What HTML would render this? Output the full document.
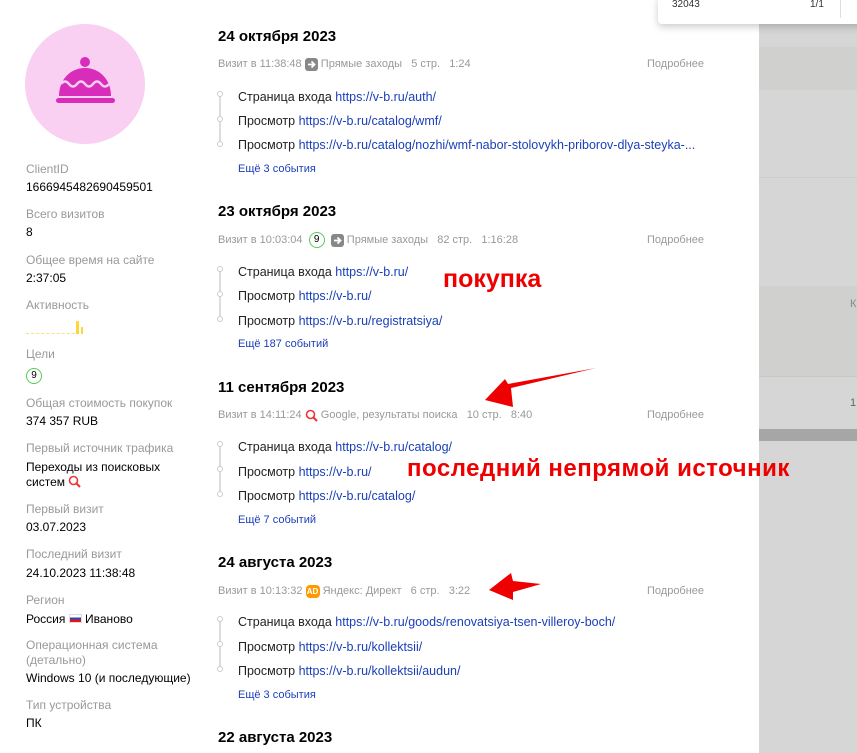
<!DOCTYPE html>
<html><head><meta charset="utf-8">
<style>
*{margin:0;padding:0;box-sizing:border-box}
body{width:857px;height:753px;overflow:hidden;background:#fff;font-family:"Liberation Sans","DejaVu Sans",sans-serif;position:relative;color:#000}
.a{position:absolute;white-space:nowrap;line-height:16px}
.l{font-size:12px;color:#999;left:26px}
.v{font-size:12px;color:#000;left:26px}
.h{font-size:15px;font-weight:bold;left:218px;line-height:20px}
.m{font-size:11px;color:#999;left:218px;height:16px}
.m *{vertical-align:middle}
.p{font-size:11px;color:#999;left:647px}
.r{font-size:12.5px;left:238px;color:#222}
.r b{font-weight:normal;color:#1a3fb8}
.more{font-size:11px;color:#1a3fb8;left:238px}
.tl{position:absolute;left:219px;width:2px;background:#ddd}
.dot{position:absolute;left:217px;width:6px;height:6px;border:1px solid #ccc;border-radius:50%;background:#fff}
.ico{display:inline-block;width:13px;height:13px;border-radius:3px;background:#888;color:#fff;font-size:8px;line-height:13px;text-align:center;font-weight:bold}
.g9{display:inline-block;width:16px;height:16px;border:1px solid #5c5;border-radius:50%;font-size:10px;color:#000;text-align:center;line-height:14px}
.red{position:absolute;color:#e00;font-weight:bold;font-size:24px;line-height:26px;white-space:nowrap}
</style></head><body>
<div style="position:absolute;left:759px;top:0;width:98px;height:753px;background:#d6d6d6"></div>
<div style="position:absolute;left:759px;top:47px;width:98px;height:43px;background:#d0d0cf"></div>
<div style="position:absolute;left:759px;top:177px;width:98px;height:1px;background:#ccc"></div>
<div style="position:absolute;left:759px;top:286px;width:98px;height:90px;background:#d0d0cf"></div>
<div style="position:absolute;left:759px;top:376px;width:98px;height:1px;background:#c8c8c8"></div>
<div style="position:absolute;left:759px;top:429px;width:98px;height:12px;background:#a6a6a6"></div>
<div class="a" style="left:850px;top:296px;font-size:11px;color:#888">К</div>
<div class="a" style="left:850px;top:395px;font-size:11px;color:#666">1</div>
<div style="position:absolute;left:658px;top:-4px;width:210px;height:28px;background:#fff;border-radius:4px;box-shadow:0 3px 8px rgba(0,0,0,.2)"></div>
<div class="a" style="left:672px;top:-3px;font-size:10px;color:#333">32043</div>
<div class="a" style="left:810px;top:-3px;font-size:10px;color:#333">1/1</div>
<div style="position:absolute;left:840px;top:0;width:1px;height:18px;background:#ddd"></div>

<div style="position:absolute;left:25px;top:24px;width:120px;height:120px;border-radius:50%;background:#f9cff2"></div>
<svg style="position:absolute;left:25px;top:24px" width="120" height="120" viewBox="25 24 120 120">
<circle cx="85" cy="62" r="5" fill="#d72dba"/>
<path d="M59 96 C59 80 70 68 85 68 C100 68 111 80 111 96 Z" fill="#d72dba"/>
<path d="M61 84 q4 -5 8 0 t8 0 t8 0 t8 0 t8 0 t8 0" stroke="#f9cff2" stroke-width="2.5" fill="none"/>
<rect x="56" y="98" width="59" height="5" rx="2.5" fill="#d72dba"/>
</svg>

<div class="a l" style="top:161px">ClientID</div>
<div class="a v" style="top:179px">1666945482690459501</div>
<div class="a l" style="top:206px">Всего визитов</div>
<div class="a v" style="top:224px">8</div>
<div class="a l" style="top:252px">Общее время на сайте</div>
<div class="a v" style="top:270px">2:37:05</div>
<div class="a l" style="top:297px">Активность</div>
<div style="position:absolute;left:26px;top:333px;width:49px;border-top:1px dashed #fde07a"></div>
<div style="position:absolute;left:76px;top:321px;width:3px;height:13px;background:#fcd53f"></div>
<div style="position:absolute;left:81px;top:327px;width:2px;height:7px;background:#fcd53f"></div>
<div class="a l" style="top:346px">Цели</div>
<div class="a" style="left:26px;top:366px"><span class="g9">9</span></div>
<div class="a l" style="top:395px">Общая стоимость покупок</div>
<div class="a v" style="top:413px">374 357 RUB</div>
<div class="a l" style="top:440px">Первый источник трафика</div>
<div class="a v" style="top:459px">Переходы из поисковых</div>
<div class="a v" style="top:474px">систем <svg width="13" height="13" viewBox="0 0 13 13" style="vertical-align:-2px"><circle cx="5.5" cy="5.5" r="4" stroke="#e33" stroke-width="1.6" fill="none"/><path d="M8.5 8.5 L12 12" stroke="#e33" stroke-width="2"/></svg></div>
<div class="a l" style="top:501px">Первый визит</div>
<div class="a v" style="top:519px">03.07.2023</div>
<div class="a l" style="top:546px">Последний визит</div>
<div class="a v" style="top:565px">24.10.2023 11:38:48</div>
<div class="a l" style="top:592px">Регион</div>
<div class="a v" style="top:611px">Россия <span style="display:inline-block;width:13px;height:9px;vertical-align:0;background:linear-gradient(#fff 33%,#1c4fc4 33%,#1c4fc4 66%,#e11 66%);border:1px solid #ddd"></span> Иваново</div>
<div class="a l" style="top:637px">Операционная система</div>
<div class="a l" style="top:652px">(детально)</div>
<div class="a v" style="top:670px">Windows 10 (и последующие)</div>
<div class="a l" style="top:697px">Тип устройства</div>
<div class="a v" style="top:715px">ПК</div>

<div class="a h" style="top:27px">24 октября 2023</div>
<div class="a m" style="top:56px"><span>Визит в 11:38:48</span> <svg width="13" height="13" viewBox="0 0 13 13"><rect width="13" height="13" rx="3" fill="#888"/><path d="M3 6.5h6M6.5 3.5l3 3-3 3" stroke="#fff" stroke-width="1.8" fill="none"/></svg> <span>Прямые заходы&nbsp;&nbsp; 5 стр.&nbsp;&nbsp; 1:24</span></div>
<div class="a p" style="top:56px">Подробнее</div>
<div class="tl" style="top:94px;height:52px"></div>
<div class="dot" style="top:91px"></div><div class="dot" style="top:116px"></div><div class="dot" style="top:141px"></div>
<div class="a r" style="top:89px">Страница входа <b>https://v-b.ru/auth/</b></div>
<div class="a r" style="top:113px">Просмотр <b>https://v-b.ru/catalog/wmf/</b></div>
<div class="a r" style="top:137px">Просмотр <b>https://v-b.ru/catalog/nozhi/wmf-nabor-stolovykh-priborov-dlya-steyka-...</b></div>
<div class="a more" style="top:161px">Ещё 3 события</div>

<div class="a h" style="top:202px">23 октября 2023</div>
<div class="a m" style="top:232px"><span>Визит в 10:03:04</span> &nbsp;<span class="g9">9</span>&nbsp; <svg width="13" height="13" viewBox="0 0 13 13"><rect width="13" height="13" rx="3" fill="#888"/><path d="M3 6.5h6M6.5 3.5l3 3-3 3" stroke="#fff" stroke-width="1.8" fill="none"/></svg> <span>Прямые заходы&nbsp;&nbsp; 82 стр.&nbsp;&nbsp; 1:16:28</span></div>
<div class="a p" style="top:232px">Подробнее</div>
<div class="tl" style="top:269px;height:52px"></div>
<div class="dot" style="top:266px"></div><div class="dot" style="top:291px"></div><div class="dot" style="top:316px"></div>
<div class="a r" style="top:264px">Страница входа <b>https://v-b.ru/</b></div>
<div class="a r" style="top:288px">Просмотр <b>https://v-b.ru/</b></div>
<div class="a r" style="top:313px">Просмотр <b>https://v-b.ru/registratsiya/</b></div>
<div class="a more" style="top:336px">Ещё 187 событий</div>

<div class="a h" style="top:378px">11 сентября 2023</div>
<div class="a m" style="top:407px"><span>Визит в 14:11:24</span> <svg width="13" height="13" viewBox="0 0 13 13"><circle cx="5.5" cy="5.5" r="4" stroke="#e33" stroke-width="1.6" fill="none"/><path d="M8.5 8.5 L12 12" stroke="#e33" stroke-width="2"/></svg> <span>Google, результаты поиска&nbsp;&nbsp; 10 стр.&nbsp;&nbsp; 8:40</span></div>
<div class="a p" style="top:407px">Подробнее</div>
<div class="tl" style="top:444px;height:52px"></div>
<div class="dot" style="top:441px"></div><div class="dot" style="top:466px"></div><div class="dot" style="top:491px"></div>
<div class="a r" style="top:439px">Страница входа <b>https://v-b.ru/catalog/</b></div>
<div class="a r" style="top:464px">Просмотр <b>https://v-b.ru/</b></div>
<div class="a r" style="top:488px">Просмотр <b>https://v-b.ru/catalog/</b></div>
<div class="a more" style="top:512px">Ещё 7 событий</div>

<div class="a h" style="top:553px">24 августа 2023</div>
<div class="a m" style="top:583px"><span>Визит в 10:13:32</span> <span class="ico" style="background:#f90;border-radius:4px;width:14px">AD</span> <span>Яндекс: Директ&nbsp;&nbsp; 6 стр.&nbsp;&nbsp; 3:22</span></div>
<div class="a p" style="top:583px">Подробнее</div>
<div class="tl" style="top:619px;height:52px"></div>
<div class="dot" style="top:616px"></div><div class="dot" style="top:641px"></div><div class="dot" style="top:666px"></div>
<div class="a r" style="top:614px">Страница входа <b>https://v-b.ru/goods/renovatsiya-tsen-villeroy-boch/</b></div>
<div class="a r" style="top:639px">Просмотр <b>https://v-b.ru/kollektsii/</b></div>
<div class="a r" style="top:663px">Просмотр <b>https://v-b.ru/kollektsii/audun/</b></div>
<div class="a more" style="top:687px">Ещё 3 события</div>

<div class="a h" style="top:728px">22 августа 2023</div>

<div class="red" style="left:443px;top:266px;font-size:25px">покупка</div>
<div class="red" style="left:407px;top:456px;letter-spacing:0.5px">последний непрямой источник</div>
<svg style="position:absolute;left:0;top:0" width="857" height="753">
<path d="M596 368 L511 388 L513 407 L485 400 L505 379 L508 384 Z" fill="#e00"/>
<path d="M541 584 L513 581 L511 573 L489 590 L513 600 L513 592 Z" fill="#e00"/>
</svg>
</body></html>
